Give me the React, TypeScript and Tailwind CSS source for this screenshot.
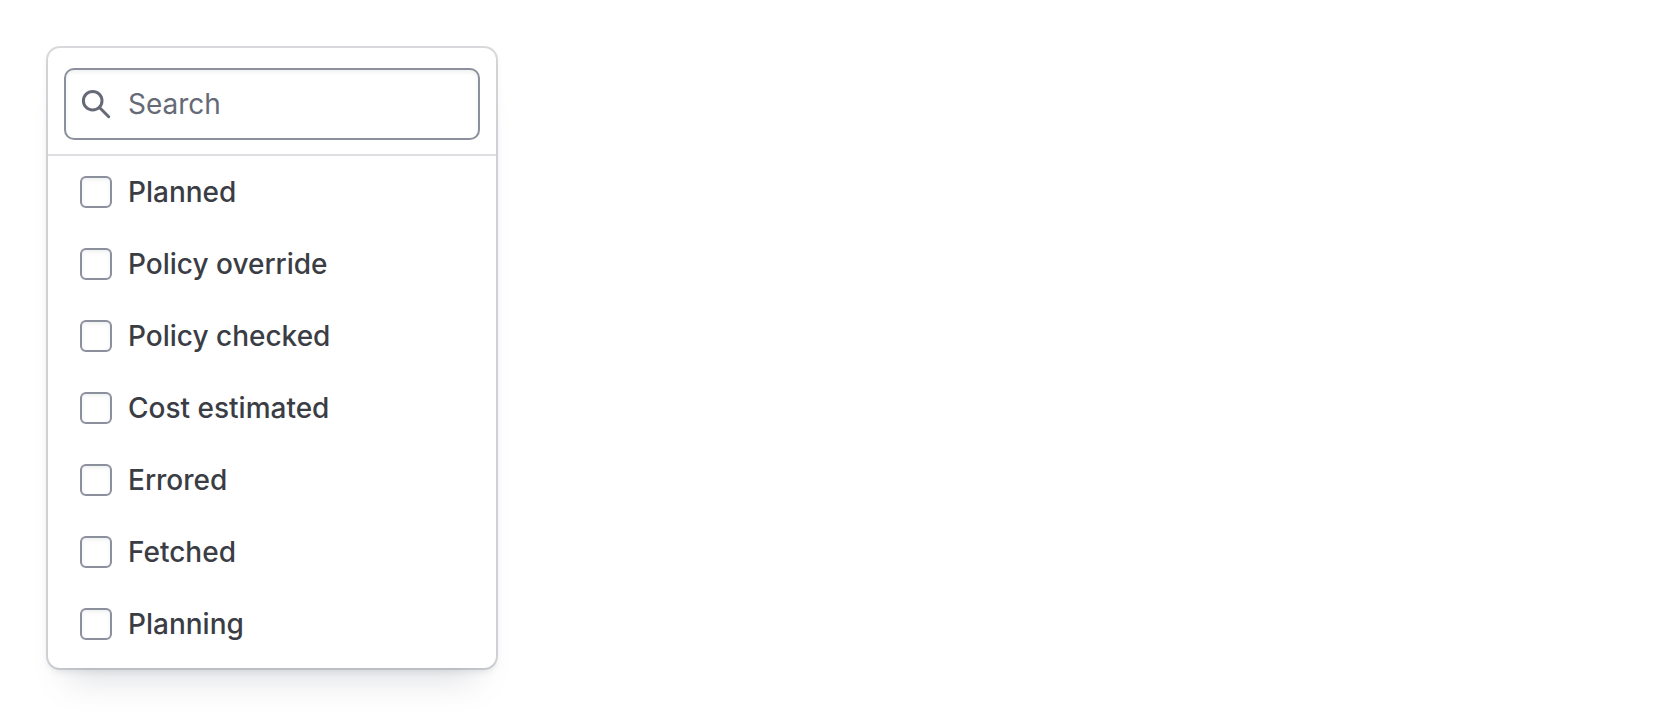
import { useState } from 'react'

const statuses = [
  'Planned',
  'Policy override',
  'Policy checked',
  'Cost estimated',
  'Errored',
  'Fetched',
  'Planning',
]

function SearchIcon() {
  return (
    <svg
      viewBox="0 0 32 32"
      className="size-8 shrink-0"
      fill="none"
      stroke="#656a76"
      strokeWidth="3"
      strokeLinecap="round"
      aria-hidden="true"
    >
      <circle cx="12.7" cy="12.7" r="9.3" />
      <path d="M19.5 19.5l9.2 9.2" />
    </svg>
  )
}

export default function App() {
  const [query, setQuery] = useState('')
  const visible = statuses.filter((s) => s.toLowerCase().includes(query.toLowerCase()))

  return (
    <main className="min-h-screen bg-white px-12 pt-12 font-[Inter,sans-serif] text-[28px] leading-10">
      <section className="w-full max-w-[448px] rounded-xl bg-white pb-2 shadow-[0_0_0_2px_#656a7640,0_4px_6px_#656a7626,0_32px_32px_-20px_#656a7633]">
        <div className="border-b-2 border-[#dedfe3] px-4 pt-5 pb-[14px]">
          <label className="flex h-[72px] items-center gap-4 rounded-[10px] border-2 border-[#8c909c] px-[14px] shadow-[inset_0_2px_4px_#656a761a]">
            <SearchIcon />
            <input
              type="text"
              aria-label="Search"
              placeholder="Search"
              className="min-w-0 flex-1 text-[#3b3d45] outline-none placeholder:text-[#656a76]"
              value={query}
              onChange={(e) => setQuery(e.target.value)}
            />
          </label>
        </div>
        <ul>
          {visible.map((status) => (
            <li key={status}>
              <label className="flex h-[72px] items-center gap-4 px-8 font-medium text-[#3b3d45]">
                <input
                  type="checkbox"
                  name="status"
                  value={status}
                  className="size-8 shrink-0 appearance-none rounded-md border-2 border-[#8c909c] bg-white shadow-[inset_0_2px_4px_#656a761a] checked:bg-[#1060ff]"
                />
                {status}
              </label>
            </li>
          ))}
        </ul>
      </section>
    </main>
  )
}
